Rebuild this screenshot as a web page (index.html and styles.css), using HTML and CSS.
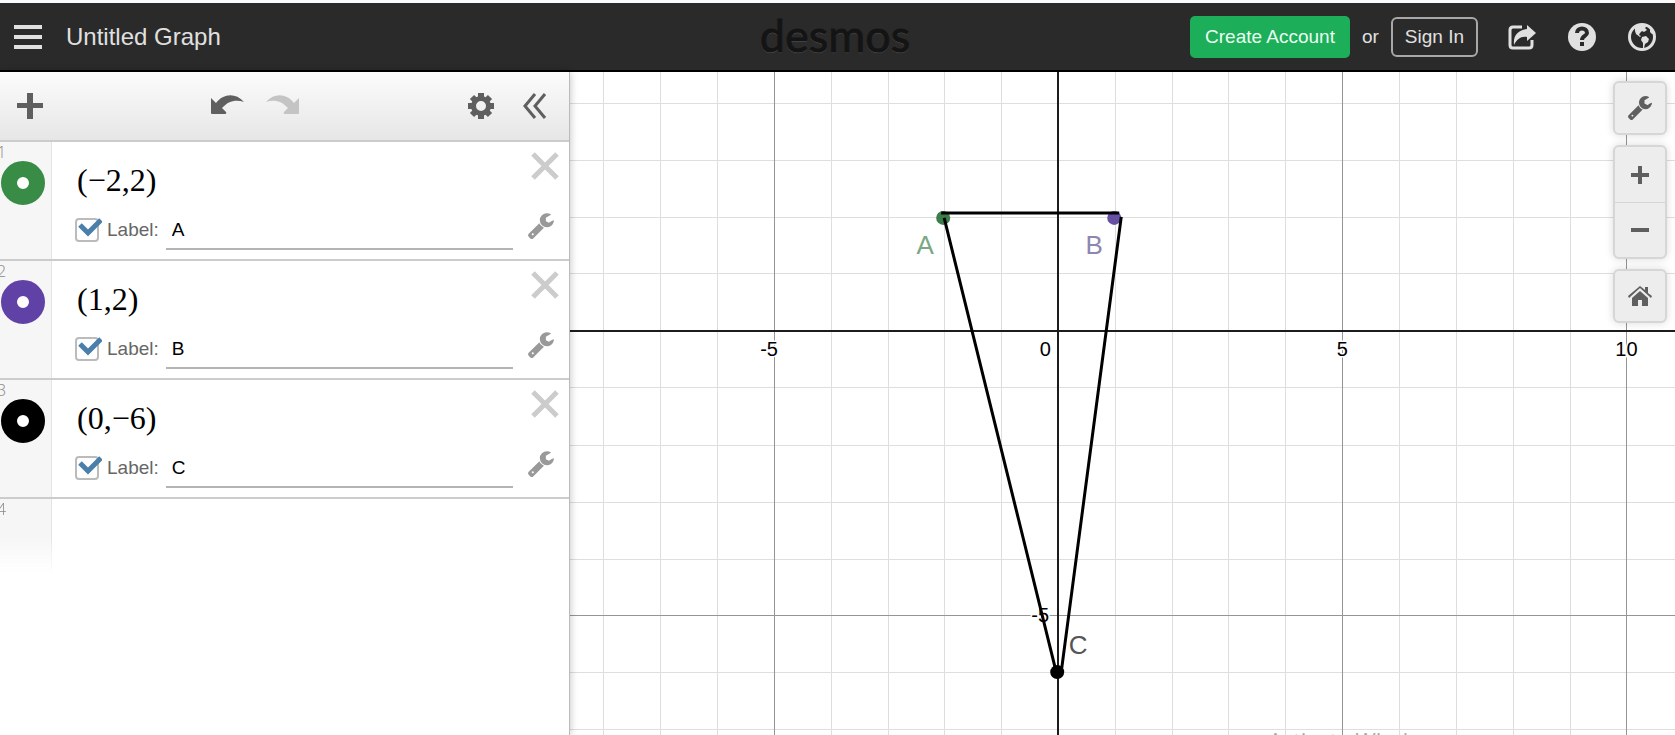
FILE: index.html
```html
<!DOCTYPE html>
<html lang="en">
<head>
    <meta charset="UTF-8">
    <meta name="viewport" content="width=device-width, initial-scale=1.0">
    <title>Untitled Graph</title>
    <link rel="stylesheet" href="styles.css">
</head>
<body>
    <!-- Shared icons -->
    <svg class="icon-defs" aria-hidden="true">
        <symbol id="icon-wrench" viewBox="80 120 1652 1652">
            <path d="M448 1472q0-26-19-45t-45-19-45 19-19 45 19 45 45 19 45-19 19-45zm644-420l-682 682q-37 37-90 37-52 0-91-37l-106-108q-38-36-38-90 0-53 38-91l681-681q39 98 114.500 173.500t173.500 114.500zm634-435q0 39-23 106-47 134-164.500 217.500t-258.500 83.500q-185 0-316.500-131.500t-131.500-316.500 131.500-316.500 316.500-131.500q58 0 121.500 16.500t107.500 46.500q16 11 16 28t-16 28l-293 169v224l193 107q5-3 79-48.500t135.500-81 70.500-35.500q15 0 23.500 10t8.500 25z"/>
        </symbol>
        <symbol id="icon-close" viewBox="0 0 28 28">
            <path d="M2 2L26 26M26 2L2 26" stroke="currentColor" stroke-width="5"/>
        </symbol>
        <symbol id="icon-check" viewBox="0 0 26 26">
            <path d="M4 7L12 15L25 2" fill="none" stroke="currentColor" stroke-width="5"/>
        </symbol>
        <symbol id="icon-undo" viewBox="0 0 33 20">
            <path d="M0 3L5 8C12 -1 24 -3 33 7C25 4 17 6 11 13L15 17Q16 19 14 19H1Q0 19 0 18Z"/>
        </symbol>
    </svg>

    <header class="header">
        <div class="header-left">
            <button class="icon-btn" type="button" aria-label="Open menu">
                <svg width="28" height="24" viewBox="0 0 28 24"><path d="M0 0H28V4H0ZM0 10H28V14H0ZM0 20H28V24H0Z"/></svg>
            </button>
            <h1 class="graph-title">Untitled Graph</h1>
        </div>
        <a class="logo" href="#">desmos</a>
        <div class="header-right">
            <button class="create-btn" type="button">Create Account</button>
            <span class="or">or</span>
            <button class="signin-btn" type="button">Sign In</button>
            <div class="header-icons">
                <button class="icon-btn" type="button" aria-label="Share">
                    <svg width="28" height="28" viewBox="0 0 28 28">
                        <path d="M14 4H5Q2 4 2 7V22Q2 25 5 25H21Q24 25 24 22V17" fill="none" stroke="currentColor" stroke-width="3"/>
                        <path d="M19 2L28 10L19 18V14C13 13 9 16 6 22C5 12 10 7 19 6Z"/>
                    </svg>
                </button>
                <button class="icon-btn" type="button" aria-label="Help">
                    <svg width="28" height="28" viewBox="0 0 28 28">
                        <circle cx="14" cy="14" r="14"/>
                        <path d="M9 10C9 4 19 4 19 10C19 13 14 13 14 17" fill="none" stroke="#2a2a2a" stroke-width="4"/>
                        <path d="M12 19H16V23H12Z" fill="#2a2a2a"/>
                    </svg>
                </button>
                <button class="icon-btn" type="button" aria-label="Language">
                    <svg width="28" height="28" viewBox="0 0 28 28">
                        <circle cx="14" cy="14" r="12.5" fill="none" stroke="currentColor" stroke-width="3"/>
                        <path d="M7 4L12 2L19 3L17 5L19 7L16 9L14 8L12 10L11 12L13 13L12 14L8 11L7 8Z"/>
                        <path d="M14 14L18 13L21 16L20 19L17 21L16 25H15L15 20L13 17Z"/>
                        <path d="M22 6L26 11L24 11L22 9Z"/>
                    </svg>
                </button>
            </div>
        </div>
    </header>

    <main class="workspace">
        <!-- Expression list -->
        <section class="sidebar">
            <div class="toolbar">
                <button class="tool-btn" type="button" aria-label="Add item">
                    <svg width="26" height="26" viewBox="0 0 26 26"><path d="M10 0H16V10H26V15H16V26H10V15H0V10H10Z"/></svg>
                </button>
                <div class="history">
                    <button class="tool-btn" type="button" aria-label="Undo">
                        <svg width="33" height="20"><use href="#icon-undo"/></svg>
                    </button>
                    <button class="tool-btn redo" type="button" aria-label="Redo" disabled>
                        <svg width="33" height="20"><use href="#icon-undo"/></svg>
                    </button>
                </div>
                <div class="panel-tools">
                    <button class="tool-btn" type="button" aria-label="Edit list">
                        <svg width="26" height="26" viewBox="0 0 26 26">
                            <circle cx="13" cy="13" r="7.5" fill="none" stroke="currentColor" stroke-width="5"/>
                            <path d="M13 0V5M13 21V26M0 13H5M21 13H26M4 4L7 7M19 19L22 22M4 22L7 19M19 7L22 4" stroke="currentColor" stroke-width="6"/>
                        </svg>
                    </button>
                    <button class="tool-btn" type="button" aria-label="Hide list">
                        <svg width="24" height="26" viewBox="0 0 24 26"><path d="M12 1L2 13L12 25M22 1L12 13L22 25" fill="none" stroke="currentColor" stroke-width="3"/></svg>
                    </button>
                </div>
            </div>

            <ol class="expressions">
                <li class="expression">
                    <div class="gutter">
                        <span class="index">1</span>
                        <button class="point-toggle green" type="button" aria-label="Toggle point A"></button>
                    </div>
                    <div class="content">
                        <div class="math">(−2,2)</div>
                        <div class="label-row">
                            <label class="check-label">
                                <span class="check">
                                    <input type="checkbox" checked>
                                    <svg class="check-mark"><use href="#icon-check"/></svg>
                                </span>
                                Label:
                            </label>
                            <input class="label-input" type="text" value="A" aria-label="Label for point 1">
                        </div>
                    </div>
                    <div class="actions">
                        <button class="close-btn" type="button" aria-label="Delete"><svg width="28" height="28"><use href="#icon-close"/></svg></button>
                        <button class="wrench-btn" type="button" aria-label="Options"><svg width="26" height="26"><use href="#icon-wrench"/></svg></button>
                    </div>
                </li>
                <li class="expression">
                    <div class="gutter">
                        <span class="index">2</span>
                        <button class="point-toggle purple" type="button" aria-label="Toggle point B"></button>
                    </div>
                    <div class="content">
                        <div class="math">(1,2)</div>
                        <div class="label-row">
                            <label class="check-label">
                                <span class="check">
                                    <input type="checkbox" checked>
                                    <svg class="check-mark"><use href="#icon-check"/></svg>
                                </span>
                                Label:
                            </label>
                            <input class="label-input" type="text" value="B" aria-label="Label for point 2">
                        </div>
                    </div>
                    <div class="actions">
                        <button class="close-btn" type="button" aria-label="Delete"><svg width="28" height="28"><use href="#icon-close"/></svg></button>
                        <button class="wrench-btn" type="button" aria-label="Options"><svg width="26" height="26"><use href="#icon-wrench"/></svg></button>
                    </div>
                </li>
                <li class="expression">
                    <div class="gutter">
                        <span class="index">3</span>
                        <button class="point-toggle black" type="button" aria-label="Toggle point C"></button>
                    </div>
                    <div class="content">
                        <div class="math">(0,−6)</div>
                        <div class="label-row">
                            <label class="check-label">
                                <span class="check">
                                    <input type="checkbox" checked>
                                    <svg class="check-mark"><use href="#icon-check"/></svg>
                                </span>
                                Label:
                            </label>
                            <input class="label-input" type="text" value="C" aria-label="Label for point 3">
                        </div>
                    </div>
                    <div class="actions">
                        <button class="close-btn" type="button" aria-label="Delete"><svg width="28" height="28"><use href="#icon-close"/></svg></button>
                        <button class="wrench-btn" type="button" aria-label="Options"><svg width="26" height="26"><use href="#icon-wrench"/></svg></button>
                    </div>
                </li>
                <li class="expression empty">
                    <div class="gutter">
                        <span class="index">4</span>
                    </div>
                </li>
            </ol>
        </section>

        <!-- Graph paper, origin at (0,0), 57px per unit -->
        <section class="graph">
            <svg class="paper" viewBox="-488 -259 1105 663" preserveAspectRatio="xMidYMid slice">
                <path class="grid minor" d="M-455 -259V404M-398 -259V404M-341 -259V404M-227 -259V404M-170 -259V404M-114 -259V404M-57 -259V404M57 -259V404M114 -259V404M170 -259V404M227 -259V404M341 -259V404M398 -259V404M455 -259V404M512 -259V404
                    M-490 -227H620M-490 -170H620M-490 -113H620M-490 -57H620M-490 57H620M-490 114H620M-490 171H620M-490 228H620M-490 341H620M-490 398H620"/>
                <path class="grid major" d="M-284 -259V404M284 -259V404M568 -259V404M-490 284H620"/>
                <path class="grid axis" d="M0 -259V404M-490 0H620"/>

                <g class="tick-labels">
                    <text x="-289" y="25">-5</text>
                    <text x="-13" y="25">0</text>
                    <text x="284" y="25">5</text>
                    <text x="568" y="25">10</text>
                    <text x="-18" y="291">-5</text>
                </g>

                <circle cx="-115" cy="-113" r="7" fill="#3d7d49"/>
                <circle cx="56" cy="-113" r="7" fill="#6650a4"/>
                <circle cx="-1" cy="341" r="7"/>
                <path class="triangle" d="M-117 -118H61M-114 -113L-2 341M63 -114L3 341"/>

                <g class="point-labels">
                    <text x="-133" y="-77" fill="#7ba883">A</text>
                    <text x="36" y="-77" fill="#8f85b0">B</text>
                    <text x="20" y="323" fill="#555555">C</text>
                </g>
            </svg>

            <div class="graph-controls">
                <button class="control-btn" type="button" aria-label="Graph settings">
                    <svg width="24" height="24"><use href="#icon-wrench"/></svg>
                </button>
                <div class="zoom-group">
                    <button class="zoom-btn" type="button" aria-label="Zoom in">
                        <svg width="18" height="18" viewBox="0 0 18 18"><path d="M7 0H11V7H18V11H11V18H7V11H0V7H7Z"/></svg>
                    </button>
                    <button class="zoom-btn" type="button" aria-label="Zoom out">
                        <svg width="18" height="18" viewBox="0 0 18 18"><path d="M0 7H18V11H0Z"/></svg>
                    </button>
                </div>
                <button class="control-btn" type="button" aria-label="Default view">
                    <svg width="24" height="20" viewBox="0 0 24 20">
                        <path d="M12 0L17 4V1H20V7L24 10L23 12L12 2L1 12L0 10Z"/>
                        <path d="M4 12L12 5L20 12V20H14V14H10V20H4Z"/>
                    </svg>
                </button>
            </div>

            <div class="watermark">Activate Windows</div>
        </section>
    </main>
</body>
</html>
```
FILE: styles.css
```css
:root {
    --header-bg: #2a2a2a;
    --header-text: #e0e0e0;
    --icon-gray: #5f5f5f;
    --line-gray: #cccccc;
    --brand-green: #1dae5a;
}

* {
    box-sizing: border-box;
}

body {
    margin: 0;
    height: 100vh;
    display: flex;
    flex-direction: column;
    overflow: hidden;
    background: #ffffff;
    font-family: "Liberation Sans", Arial, sans-serif;
    font-size: 19px;
}

button {
    padding: 0;
    border: none;
    background: none;
    font: inherit;
    color: inherit;
    cursor: pointer;
}

svg {
    display: block;
    fill: currentColor;
}

.icon-defs {
    position: absolute;
    width: 0;
    height: 0;
}

/* Header */
.header {
    display: grid;
    grid-template-columns: 1fr auto 1fr;
    align-items: center;
    height: 72px;
    padding: 0 19px 0 14px;
    background: var(--header-bg);
    border-top: 3px solid #f8fafb;
    border-bottom: 2px solid #000000;
    color: var(--header-text);
}

.header-left,
.header-right,
.header-icons {
    display: flex;
    align-items: center;
}

.header-left {
    gap: 24px;
}

.header-right {
    justify-content: flex-end;
    gap: 12px;
}

.header-icons {
    gap: 32px;
    margin-left: 18px;
}

.graph-title {
    margin: 0;
    font-size: 24px;
    font-weight: normal;
}

.logo {
    font-family: Lato, sans-serif;
    font-size: 45px;
    line-height: 56px;
    padding-bottom: 4px;
    color: #141414;
    text-decoration: none;
    text-shadow: 0 1px 1px #555555;
    -webkit-text-stroke: 1px #141414;
}

.create-btn {
    height: 42px;
    padding: 0 15px;
    border-radius: 5px;
    background: var(--brand-green);
    color: #e8fff0;
}

.signin-btn {
    height: 40px;
    padding: 0 12px;
    border: 2px solid #a8a8a8;
    border-radius: 6px;
}

/* Expression list */
.workspace {
    flex: 1;
    display: flex;
    min-height: 0;
}

.sidebar {
    flex: 0 0 34%;
    min-width: 320px;
    z-index: 1;
    background: #ffffff;
    border-right: 1px solid #bbbbbb;
    box-shadow: 0 0 8px rgba(0, 0, 0, 0.25);
}

.toolbar {
    display: grid;
    grid-template-columns: 1fr auto 1fr;
    align-items: center;
    height: 70px;
    padding: 0 22px 0 17px;
    background: linear-gradient(#fcfcfc, #e6e6e6);
    border-bottom: 2px solid var(--line-gray);
    color: var(--icon-gray);
}

.history,
.panel-tools {
    display: flex;
    align-items: center;
    gap: 22px;
}

.history {
    padding: 0 54px 2px 0;
}

.panel-tools {
    justify-content: flex-end;
    gap: 29px;
}

.redo {
    color: #c4c4c4;
    transform: scaleX(-1);
}

.expressions {
    margin: 0;
    padding: 0;
    list-style: none;
}

.expression {
    display: flex;
    height: 119px;
    border-bottom: 2px solid var(--line-gray);
}

.gutter {
    flex: 0 0 52px;
    background: #f6f6f6;
    border-right: 1px solid #e4e4e4;
}

.index {
    display: block;
    height: 19px;
    margin-left: -3px;
    font-family: "Open Sans", sans-serif;
    font-size: 16px;
    font-weight: 300;
    line-height: 20px;
    color: #888888;
}

.point-toggle {
    display: block;
    width: 44px;
    height: 44px;
    margin-left: 1px;
    border: 16px solid;
    border-radius: 50%;
    background: #ffffff;
}

.green {
    border-color: #388c46;
}

.purple {
    border-color: #6042a6;
}

.black {
    border-color: #000000;
}

.content {
    flex: 1;
    min-width: 0;
    padding: 17px 15px 0 23px;
}

.math {
    margin-left: 2px;
    font-family: "Liberation Serif", serif;
    font-size: 32px;
    line-height: 42px;
}

.label-row {
    display: flex;
    align-items: center;
    gap: 7px;
    margin-top: 9px;
}

.check-label {
    display: flex;
    align-items: center;
    gap: 8px;
    color: #666666;
    font-size: 19px;
}

.check {
    position: relative;
}

.check input {
    display: block;
    appearance: none;
    width: 24px;
    height: 24px;
    margin: 0;
    border: 2px solid #bbbbbb;
    border-radius: 4px;
    background: #ffffff;
}

.check-mark {
    position: absolute;
    top: 0;
    left: 1px;
    width: 26px;
    height: 26px;
    color: #4a7fab;
    pointer-events: none;
    visibility: hidden;
}

.check input:checked + .check-mark {
    visibility: visible;
}

.label-input {
    flex: 1;
    min-width: 0;
    height: 40px;
    padding: 2px 6px 0;
    border: none;
    border-bottom: 2px solid #b4b4b4;
    background: none;
    font: inherit;
    color: #000000;
    outline: none;
}

.actions {
    display: flex;
    flex-direction: column;
    align-items: flex-end;
    gap: 33px;
    width: 41px;
    padding: 10px 10px 0 0;
}

.close-btn {
    color: var(--line-gray);
}

.wrench-btn {
    margin-right: 5px;
    color: #999999;
}

.empty {
    height: 74px;
    border-bottom: none;
}

.empty .gutter {
    -webkit-mask-image: linear-gradient(#000000 50%, transparent);
    mask-image: linear-gradient(#000000 50%, transparent);
}

/* Graph */
.graph {
    flex: 1;
    position: relative;
    min-width: 0;
    overflow: hidden;
}

.paper {
    width: 100%;
    height: 100%;
    fill: #000000;
}

.grid {
    fill: none;
    shape-rendering: crispEdges;
}

.minor {
    stroke: #dedede;
    stroke-width: 1px;
}

.major {
    stroke: #959595;
    stroke-width: 1px;
}

.axis {
    stroke: #1c1c1c;
    stroke-width: 2px;
}

.triangle {
    fill: none;
    stroke: #000000;
    stroke-width: 3px;
}

.tick-labels {
    font-size: 20px;
    text-anchor: middle;
    stroke: #ffffff;
    stroke-width: 3px;
    paint-order: stroke;
}

.point-labels {
    font-size: 26px;
    text-anchor: middle;
}

.graph-controls {
    position: absolute;
    top: 9px;
    right: 8px;
    display: flex;
    flex-direction: column;
    gap: 10px;
    color: var(--icon-gray);
}

.control-btn,
.zoom-group {
    width: 54px;
    border: 2px solid #d6d6d6;
    border-radius: 6px;
    background: #ededed;
    box-shadow: 0 0 8px rgba(0, 0, 0, 0.15);
}

.control-btn,
.zoom-btn {
    display: flex;
    align-items: center;
    justify-content: center;
    height: 54px;
}

.zoom-btn {
    width: 100%;
    height: 55px;
}

.zoom-btn + .zoom-btn {
    border-top: 1px solid #d6d6d6;
}

.watermark {
    position: absolute;
    right: 226px;
    bottom: -20px;
    font-family: "Open Sans", sans-serif;
    font-size: 22px;
    line-height: 30px;
    color: #aaaaaa;
}
```
